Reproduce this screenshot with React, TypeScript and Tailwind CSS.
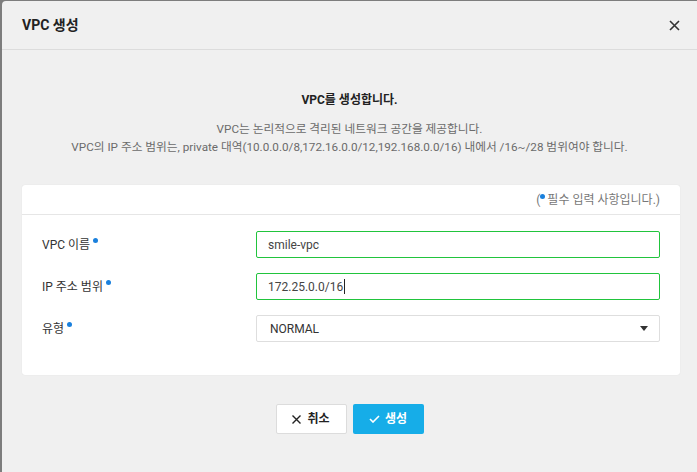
import React from 'react';

const font = { fontFamily: 'Roboto, "Noto Sans CJK KR", sans-serif' };

const Dot = () => (
  <span className="ml-[3px] inline-block h-[5px] w-[5px] -translate-y-[5px] rounded-full bg-[#1a80dd] align-middle" />
);

const Field: React.FC<{ label: string; children: React.ReactNode }> = ({ label, children }) => (
  <div className="flex items-center">
    <div className="w-[234px] pl-[20px] text-[12px] text-[#333]">
      {label}
      <Dot />
    </div>
    <div className="flex-1 pr-[20px]">{children}</div>
  </div>
);

export default function App() {
  return (
    <div className="h-[472px] w-[697px] bg-[#7d7d7d] pl-[2px] pt-[1px]" style={font}>
      <div className="flex h-full flex-col rounded-tl-[4px] bg-[#f0f0f0]">
        <div className="flex h-[49px] items-center justify-between border-b border-[#dcdcdc] pl-[20px] pr-[17px]">
          <span className="text-[14px] font-bold text-[#222]">VPC 생성</span>
          <svg width="11" height="11" viewBox="0 0 11 11" className="text-[#333]">
            <path d="M1 1L10 10M10 1L1 10" stroke="currentColor" strokeWidth="1.6" />
          </svg>
        </div>

        <div className="pt-[41px] text-center">
          <div className="text-[12px] font-bold leading-[18px] text-[#222]">VPC를 생성합니다.</div>
          <div className="mt-[11px] text-[11.7px] leading-[18px] text-[#6b6b6b]">
            <div>VPC는 논리적으로 격리된 네트워크 공간을 제공합니다.</div>
            <div>VPC의 IP 주소 범위는, private 대역(10.0.0.0/8,172.16.0.0/12,192.168.0.0/16) 내에서 /16~/28 범위여야 합니다.</div>
          </div>
        </div>

        <div className="ml-[20px] mr-[17px] mt-[29px] rounded-[3px] bg-white shadow-[0_0_1px_rgba(0,0,0,0.12)]">
          <div className="flex h-[30px] items-center justify-end border-b border-[#e6e6e6] pr-[20px] text-[12px] text-[#777]">
            (<span className="mr-[2px] inline-block h-[5px] w-[5px] -translate-y-[3px] rounded-full bg-[#1a80dd]" />필수 입력 사항입니다.)
          </div>
          <div className="flex flex-col gap-[15px] pb-[33px] pt-[16px]">
            <Field label="VPC 이름">
              <div className="flex h-[27px] items-center rounded-[2px] border border-[#21c43d] px-[11px] text-[12px] text-[#444]">
                smile-vpc
              </div>
            </Field>
            <Field label="IP 주소 범위">
              <div className="flex h-[27px] items-center rounded-[2px] border border-[#21c43d] px-[11px] text-[12px] text-[#444]">
                172.25.0.0/16
                <span className="ml-[1px] inline-block h-[15px] w-px bg-[#222]" />
              </div>
            </Field>
            <Field label="유형">
              <div className="flex h-[27px] items-center justify-between rounded-[2px] border border-[#dedede] pl-[13px] pr-[11px] text-[12px] text-[#333]">
                NORMAL
                <svg width="8" height="5" viewBox="0 0 8 5">
                  <path d="M0 0H8L4 5Z" fill="#333" />
                </svg>
              </div>
            </Field>
          </div>
        </div>

        <div className="mt-[29px] flex justify-center gap-[6px]">
          <button className="flex h-[30px] w-[71px] items-center justify-center gap-[6px] rounded-[2px] border border-[#dcdcdc] bg-white text-[12px] font-bold text-[#222]">
            <svg width="9" height="9" viewBox="0 0 9 9">
              <path d="M0.5 0.5L8.5 8.5M8.5 0.5L0.5 8.5" stroke="#222" strokeWidth="1.4" />
            </svg>
            취소
          </button>
          <button className="flex h-[30px] w-[71px] items-center justify-center gap-[5px] rounded-[2px] bg-[#16ade8] text-[12px] font-bold text-white">
            <svg width="11" height="8" viewBox="0 0 11 8">
              <path d="M1 4L4 7L10 1" stroke="white" strokeWidth="1.6" fill="none" />
            </svg>
            생성
          </button>
        </div>
      </div>
    </div>
  );
}
